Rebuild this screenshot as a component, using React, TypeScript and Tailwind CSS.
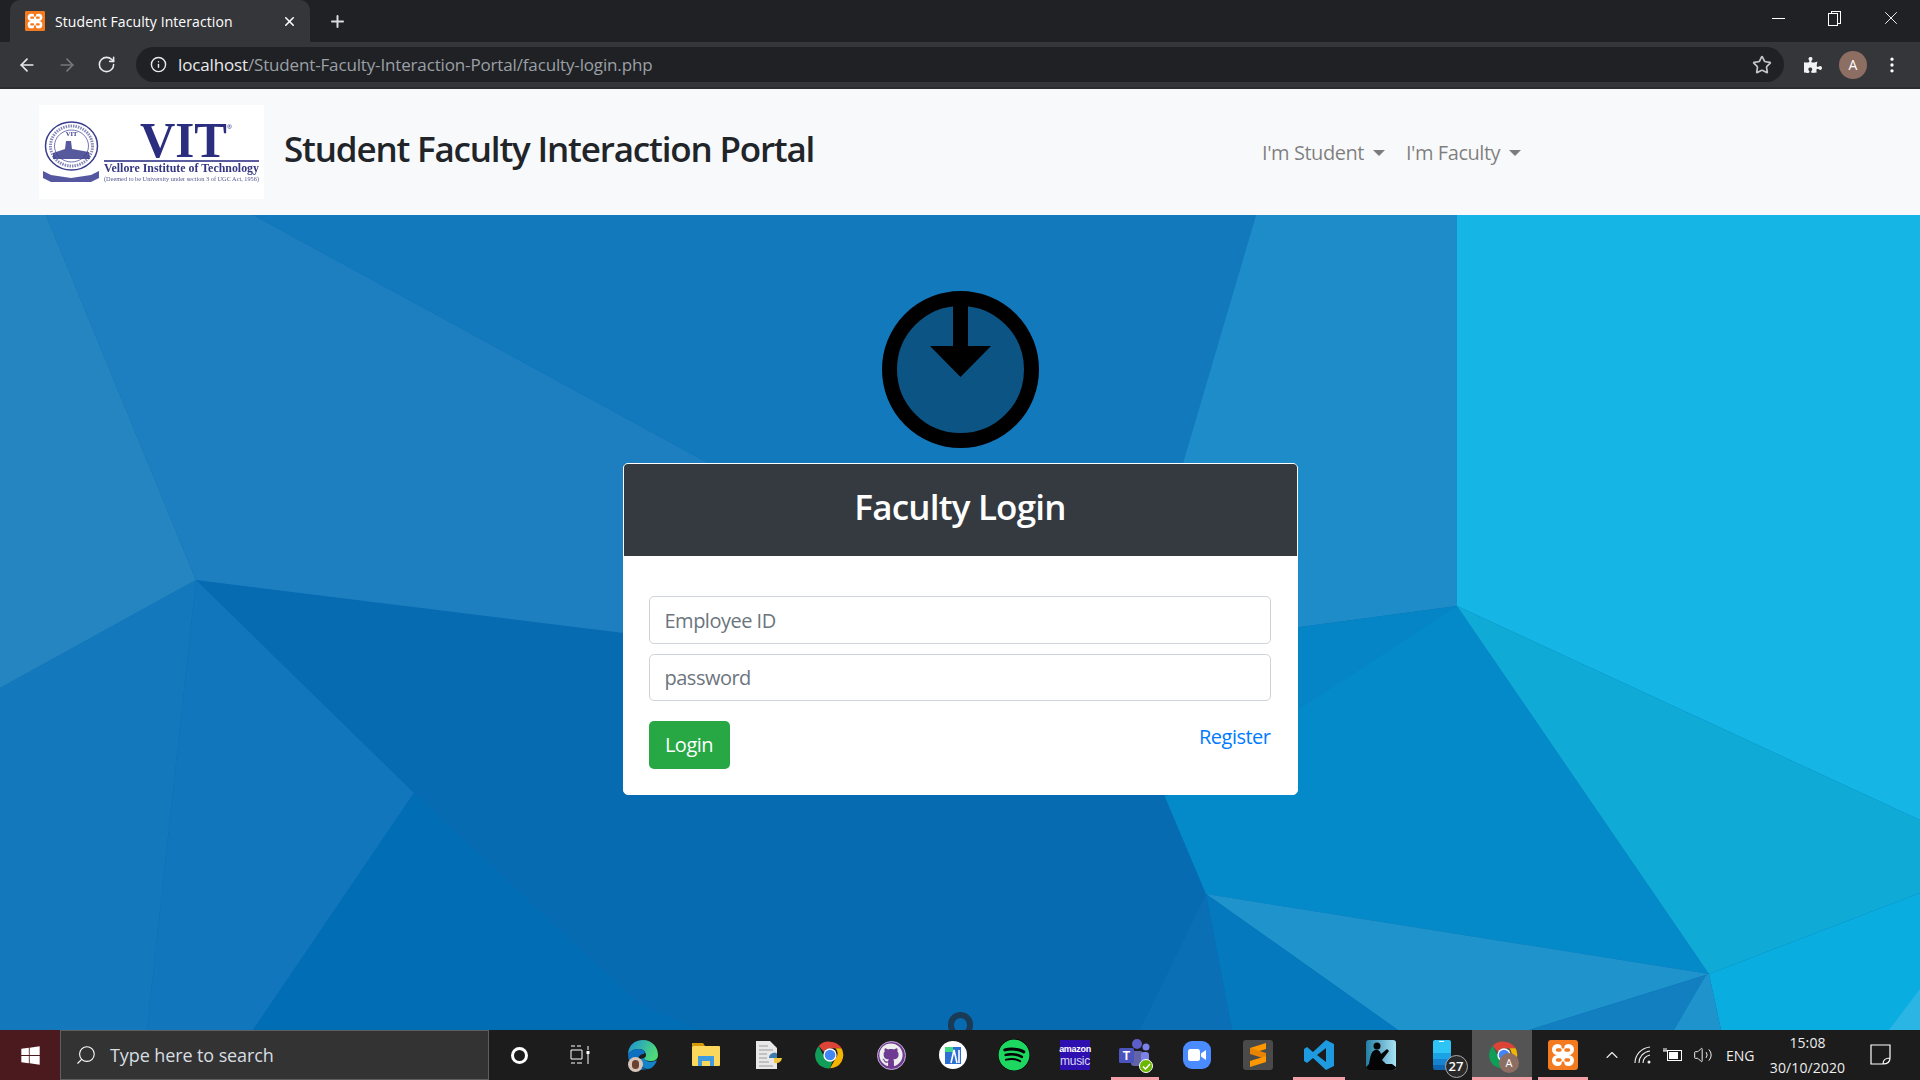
import { ArrowLeft, ArrowRight, RotateCw, Info, Star, EllipsisVertical, X, Plus, ChevronUp, Search, Volume2 } from "lucide-react"
import { FaGithub, FaSpotify, FaWindows, FaPuzzlePiece } from "react-icons/fa"
import type { ReactNode } from "react"

const uiFont = "font-['Open_Sans','Noto_Sans',sans-serif]"

const polygons: [string, string][] = [
  ["0,0 46,0 196,365 0,473", "#2585c0"],
  ["46,0 253,0 708,248 640,300 640,420 196,365", "#1e7fc0"],
  ["253,0 1256,0 1183,248 708,248", "#1279bd"],
  ["1256,0 1457,0 1457,391 1165,430 1183,248", "#1e8cc9"],
  ["1165,430 1457,391 1298,520 1165,582", "#0585c5"],
  ["1457,391 1709,759 1206,679 1165,582", "#058ac9"],
  ["1457,0 1920,0 1920,605 1457,391", "#15b6e6"],
  ["1457,391 1920,605 1920,678 1709,759", "#0faad5"],
  ["1709,759 1920,678 1920,815 1721,815", "#0aade0"],
  ["1920,774 1920,815 1889,815", "#2ab5e5"],
  ["1206,679 1709,759 1529,815 1398,815", "#1f93cb"],
  ["1206,679 1398,815 1232,815", "#0479bd"],
  ["1206,679 1232,815 1140,815", "#0a6fb5"],
  ["1706,760 1529,815 1674,815", "#127fc0"],
  ["1706,760 1674,815 1721,815 1709,759", "#1f93cb"],
  ["0,473 196,365 147,815 0,815", "#1478bd"],
  ["196,365 414,578 253,815 147,815", "#1176bb"],
  ["414,578 640,790 700,815 253,815", "#006db5"],
]

function Background() {
  return (
    <svg className="absolute inset-0 w-full h-full" viewBox="0 0 1920 815" preserveAspectRatio="none">
      <rect width="1920" height="815" fill="#066bb0" />
      {polygons.map(([points, fill]) => (
        <polygon key={points} points={points} fill={fill} />
      ))}
    </svg>
  )
}

function VitLogo() {
  return (
    <svg width="225" height="94" viewBox="0 0 225 94" className="bg-white shrink-0 blur-[0.4px]">
      <g fill="none" stroke="#3a3c8c">
        <ellipse cx="32.5" cy="41" rx="26" ry="24" strokeWidth="1.5" />
        <ellipse cx="32.5" cy="41" rx="21" ry="20" strokeWidth="3" strokeDasharray="1.5 1" opacity="0.6" />
        <ellipse cx="32.5" cy="41" rx="17" ry="16" strokeWidth="0.7" />
      </g>
      <path d="M4 66 L12 70 L32 73 L52 70 L60 66 L60 73 L52 77 L12 77 L4 73 Z" fill="#5557a0" />
      <path d="M14 48 L26 44 L27 36 L32 36 L33 44 L50 47 L51 54 L14 54 Z" fill="#3a3c8c" opacity="0.85" />
      <text x="32.5" y="31" textAnchor="middle" fontSize="6.5" fontFamily="Liberation Serif, serif" fontWeight="700" fill="#3a3c8c">VIT</text>
      <text x="101" y="52" fontSize="50" fontFamily="Liberation Serif, serif" fontWeight="700" fill="#2b2d7f" textLength="87" lengthAdjust="spacingAndGlyphs">VIT</text>
      <text x="188" y="24" fontSize="6" fill="#2b2d7f">®</text>
      <rect x="65" y="55" width="155" height="2" fill="#5a5ca0" />
      <text x="65" y="67" fontSize="11.5" fontFamily="Liberation Serif, serif" fontWeight="700" fill="#34367f" textLength="155" lengthAdjust="spacingAndGlyphs">Vellore Institute of Technology</text>
      <text x="65" y="76" fontSize="5.5" fontFamily="Liberation Serif, serif" fill="#55578f" textLength="155" lengthAdjust="spacingAndGlyphs">(Deemed to be University under section 3 of UGC Act, 1956)</text>
    </svg>
  )
}

function Xampp({ size, radius = 3 }: { size: number; radius?: number }) {
  return (
    <svg width={size} height={size} viewBox="0 0 30 30">
      <rect width="30" height="30" rx={radius} fill="#f47a20" />
      <g fill="#fff">
        <circle cx="9.5" cy="9.5" r="5.5" />
        <circle cx="20.5" cy="9.5" r="5.5" />
        <circle cx="9.5" cy="20.5" r="5.5" />
        <circle cx="20.5" cy="20.5" r="5.5" />
        <rect x="9" y="9" width="12" height="12" />
      </g>
      <path d="M15 4 V7 M15 23 V26" stroke="#f47a20" strokeWidth="3" strokeLinecap="round" />
      <path d="M9.5 10 H12 M18 10 H20.5 M9.5 20 H12 M18 20 H20.5" stroke="#f47a20" strokeWidth="3.5" strokeLinecap="round" />
    </svg>
  )
}

function ChromeIcon({ size = 28 }: { size?: number }) {
  return (
    <svg width={size} height={size} viewBox="0 0 48 48">
      <path d="M24 4 A20 20 0 0 1 41.3 14 L24 14 A10 10 0 0 0 15 19.5 L7 10.5 A20 20 0 0 1 24 4 Z" fill="#db4437" />
      <path d="M41.3 14 A20 20 0 0 1 24 44 L33 28 A10 10 0 0 0 32 14 Z" fill="#f4b400" />
      <path d="M24 44 A20 20 0 0 1 7 10.5 L16 28 A10 10 0 0 0 28 33 Z" fill="#0f9d58" />
      <circle cx="24" cy="24" r="10" fill="#fff" />
      <circle cx="24" cy="24" r="8" fill="#4285f4" />
    </svg>
  )
}

function EdgeIcon() {
  return (
    <div className="relative w-[32px] h-[32px]">
      <svg width="32" height="32" viewBox="0 0 32 32">
        <defs>
          <linearGradient id="edge-top" x1="0" y1="0" x2="1" y2="0.4">
            <stop offset="0" stopColor="#1a8fd8" />
            <stop offset="1" stopColor="#4fd97a" />
          </linearGradient>
        </defs>
        <path d="M1 16 C1 6 8 1 16 1 C25 1 31 8 31 16 C31 20 28 22 24 22 C20 22 17 21 17 19 C21 18 19 10 12 10 C6 10 2 13 1 16 Z" fill="url(#edge-top)" />
        <path d="M1 16 C3 11 8 10 12 10 C17 10 19 13 17 15 C14 15 11 17 11 21 C11 26 16 31 21 30 C12 33 1 27 1 16 Z" fill="#0f6fc0" />
        <path d="M17 19 C18 23 25 24 30 21 C28 27 24 30 21 30 C16 30 12 25 13 20 Z" fill="#1583c9" />
      </svg>
      <div className="absolute left-[1px] bottom-[-1px] w-[15px] h-[15px] rounded-full bg-[#d8c4b8] flex items-center justify-center">
        <div className="w-[7px] h-[9px] rounded-full bg-[#6a4030]" />
      </div>
    </div>
  )
}

function FolderIcon() {
  return (
    <svg width="28" height="28" viewBox="0 0 28 28">
      <path d="M0 2 H11 L13 5 H0 Z" fill="#d69a06" />
      <rect y="5" width="28" height="20" rx="1" fill="#fbd75b" />
      <path d="M6 25 V15 H22 V25 H18 V20 H10 V25 Z" fill="#3f9ae0" />
    </svg>
  )
}

function PythonFile() {
  return (
    <svg width="28" height="30" viewBox="0 0 28 30">
      <path d="M1 1 H15 L22 8 V29 H1 Z" fill="#e8e8e8" />
      <path d="M4 6 H13 M4 10 H18 M4 14 H12 M4 18 H12 M4 22 H14 M4 26 H18" stroke="#999" strokeWidth="1.2" />
      <path d="M14 18 C14 12 22 12 22 14 V18 H14 Z" fill="#3f7cac" />
      <path d="M27 17 C27 24 19 24 19 22 V18 H27 Z" fill="#f2c63c" />
    </svg>
  )
}

function AndroidStudio() {
  return (
    <div className="w-[28px] h-[28px] rounded-full bg-white flex items-center justify-center">
      <svg width="18" height="20" viewBox="0 0 18 20">
        <rect x="1" y="2" width="16" height="17" fill="#2d6fd6" />
        <path d="M1 2 H9 V7 H1 Z" fill="#3ddc84" />
        <path d="M7 18 L10 5 L13 18 M15 5 V18" stroke="#fff" strokeWidth="1.6" fill="none" />
      </svg>
    </div>
  )
}

function AmazonMusic() {
  return (
    <div className="w-[30px] h-[30px] bg-[#2e0fb0] flex flex-col items-center justify-center text-white leading-[12px] font-['Liberation_Sans',sans-serif]">
      <span className="text-[9px] font-bold tracking-[-0.3px]">amazon</span>
      <span className="text-[12px] tracking-[-0.3px] text-[#d8d8f0]">music</span>
    </div>
  )
}

function TeamsIcon() {
  return (
    <div className="relative w-[32px] h-[32px]">
      <svg width="32" height="32" viewBox="0 0 32 32">
        <circle cx="18" cy="5" r="5" fill="#5b5fc7" />
        <circle cx="27" cy="8" r="3.5" fill="#7b83eb" />
        <rect x="12" y="12" width="12" height="15" rx="3" fill="#6264a7" />
        <rect x="22" y="13" width="8" height="11" rx="3" fill="#7b83eb" />
        <rect x="0" y="9" width="15" height="15" rx="1.5" fill="#4b53bc" />
        <text x="7.5" y="21" textAnchor="middle" fontSize="12" fontWeight="700" fill="#fff" fontFamily="Liberation Sans, sans-serif">T</text>
      </svg>
      <div className="absolute right-[-2px] bottom-[-2px] w-[14px] h-[14px] rounded-full bg-[#6bb700] border border-white flex items-center justify-center">
        <svg width="9" height="9" viewBox="0 0 9 9"><path d="M1 4.5 L3.5 7 L8 2" stroke="#fff" strokeWidth="1.5" fill="none" /></svg>
      </div>
    </div>
  )
}

function ZoomIcon() {
  return (
    <div className="w-[28px] h-[28px] rounded-[9px] bg-[#4a8cff] flex items-center justify-center">
      <svg width="18" height="12" viewBox="0 0 18 12">
        <rect width="12" height="12" rx="2.5" fill="#fff" />
        <path d="M13 4.5 L18 1 V11 L13 7.5 Z" fill="#fff" />
      </svg>
    </div>
  )
}

function SublimeIcon() {
  return (
    <div className="w-[30px] h-[30px] rounded-[3px] bg-[#4a4a4a] flex items-center justify-center">
      <svg width="16" height="24" viewBox="0 0 16 24">
        <path d="M16 0 V6 L0 11 V5 Z" fill="#ff9800" />
        <path d="M0 11 L16 16 V10 L0 5 Z" fill="#e88400" />
        <path d="M16 13 V19 L0 24 V18 Z" fill="#ff9800" />
      </svg>
    </div>
  )
}

function VsCodeIcon() {
  return (
    <svg width="30" height="30" viewBox="0 0 30 30">
      <path d="M22 0 L30 4 V26 L22 30 L9 18 L3 23 L0 21 V9 L3 7 L9 12 Z M22 8 L13 15 L22 22 Z" fill="#1e9be0" />
    </svg>
  )
}

function KindleIcon() {
  return (
    <div className="w-[30px] h-[30px] rounded-[3px] bg-gradient-to-r from-[#1f7fa5] to-[#a8e4f5] overflow-hidden">
      <svg width="30" height="30" viewBox="0 0 30 30">
        <circle cx="11" cy="6" r="3.5" fill="#050505" />
        <path d="M0 30 V27 L3 24 C4 18 5 11 9 10 C12 9 14 11 15 14 L21 9 L23 11 L16 20 L20 24 L26 24 L30 27 V30 Z" fill="#050505" />
      </svg>
    </div>
  )
}

function PhoneIcon() {
  return (
    <div className="relative w-[18px] h-[30px]">
      <div className="w-[18px] h-[30px] rounded-[2px] overflow-hidden flex flex-col">
        <div className="h-[13px] bg-[#2ec4f5] flex justify-center pt-[1px]">
          <div className="w-[5px] h-[1px] bg-white" />
        </div>
        <div className="h-[6px] bg-[#1ca3e6]" />
        <div className="h-[6px] bg-[#1583cf]" />
        <div className="h-[5px] bg-[#0f66b0]" />
      </div>
      <div className="absolute left-[12px] top-[15px] w-[23px] h-[23px] rounded-full bg-[#2a2a2a] border border-[#aaa] text-white text-[13px] font-semibold flex items-center justify-center">27</div>
    </div>
  )
}

function ActiveChrome() {
  return (
    <div className="relative w-[28px] h-[32px]">
      <ChromeIcon size={32} />
      <div className="absolute left-[11px] top-[14px] w-[20px] h-[20px] rounded-full bg-[#8d6e63] text-white text-[11px] flex items-center justify-center">A</div>
    </div>
  )
}

interface Slot {
  width: number
  icon: ReactNode
  underline?: string
  active?: boolean
}

const slots: Slot[] = [
  { width: 61, icon: <div className="w-[17px] h-[17px] rounded-full border-[3px] border-white" /> },
  {
    width: 60,
    icon: (
      <svg width="20" height="20" viewBox="0 0 20 20" fill="none" stroke="#fff" strokeWidth="1">
        <path d="M5 1 H1 M11 1 H7 M1 5 H12 V14 H1 Z M5 18 H1 M12 18 H7 M18 1 V5 M18 9 V19" />
        <rect x="16.5" y="6" width="3" height="3" fill="#fff" stroke="none" />
      </svg>
    ),
  },
  { width: 65, icon: <EdgeIcon /> },
  { width: 62, icon: <FolderIcon /> },
  { width: 63, icon: <PythonFile /> },
  { width: 60, icon: <ChromeIcon size={32} /> },
  {
    width: 62,
    icon: (
      <div className="w-[29px] h-[29px] rounded-full bg-[#6e3a92] border border-[#c5b0d5] flex items-center justify-center">
        <FaGithub size={24} color="#eee" />
      </div>
    ),
  },
  { width: 61, icon: <AndroidStudio /> },
  { width: 62, icon: <FaSpotify size={32} color="#1ed760" className="bg-black rounded-full" /> },
  { width: 60, icon: <AmazonMusic /> },
  { width: 60, icon: <TeamsIcon />, underline: "inset-x-[6px]" },
  { width: 63, icon: <ZoomIcon /> },
  { width: 60, icon: <SublimeIcon /> },
  { width: 62, icon: <VsCodeIcon />, underline: "inset-x-[5px]" },
  { width: 61, icon: <KindleIcon /> },
  { width: 61, icon: <PhoneIcon /> },
  { width: 60, icon: <ActiveChrome />, underline: "inset-x-0", active: true },
  { width: 50, icon: <Xampp size={30} />, underline: "inset-x-0" },
]

function BrowserChrome() {
  return (
    <div className={`shrink-0 font-['Open_Sans',sans-serif]`}>
      <div className="h-[42px] bg-[#202124] flex items-end">
        <div className="ml-[10px] w-[300px] h-[42px] bg-[#35363a] rounded-t-[10px] flex items-center pl-[15px] pr-[13px] text-white">
          <Xampp size={20} radius={2} />
          <span className="ml-[10px] text-[14px] tracking-[0.08px] flex-1">Student Faculty Interaction</span>
          <X size={15} strokeWidth={2.5} />
        </div>
        <div className="ml-[18px] h-[42px] flex items-center text-[#dadce0]">
          <Plus size={19} strokeWidth={2.5} />
        </div>
        <div className="ml-auto h-[42px] flex items-center pb-[6px] text-white">
          <div className="w-[56px] flex justify-center"><div className="w-[13px] h-[1px] bg-white" /></div>
          <div className="w-[56px] flex justify-center">
            <div className="relative w-[13px] h-[15px]">
              <div className="absolute left-[3px] top-0 w-[10px] h-[13px] border border-white" />
              <div className="absolute left-0 top-[2px] w-[10px] h-[13px] border border-white bg-[#202124]" />
            </div>
          </div>
          <div className="w-[58px] flex justify-center"><X size={22} strokeWidth={1} /></div>
        </div>
      </div>
      <div className="h-[47px] bg-[#35363a] border-b-2 border-[#2b2c2f] flex items-start pt-[5px]">
        <div className="w-[136px] h-[35px] flex items-center pl-[17px] gap-[20px]">
          <ArrowLeft size={20} color="#e8eaed" />
          <ArrowRight size={20} color="#75777b" />
          <RotateCw size={19} color="#e8eaed" />
        </div>
        <div className="w-[1648px] h-[35px] rounded-full bg-[#202124] flex items-center pl-[14px] pr-[12px]">
          <Info size={17} color="#e8eaed" />
          <span className="ml-[11px] text-[17px] tracking-[-0.15px] text-[#e8eaed] flex-1">
            localhost<span className="text-[#9aa0a6]">/Student-Faculty-Interaction-Portal/faculty-login.php</span>
          </span>
          <Star size={20} color="#c4c7c9" />
        </div>
        <div className="flex-1 h-[35px] flex items-center pl-[20px] text-white">
          <FaPuzzlePiece size={18} color="#f1f3f4" />
          <div className="ml-[17px] w-[28px] h-[28px] rounded-full bg-[#8d6e63] flex items-center justify-center text-[14px]">A</div>
          <EllipsisVertical size={20} className="ml-[15px]" />
        </div>
      </div>
    </div>
  )
}

function Navbar() {
  return (
    <nav className={`h-[126px] shrink-0 bg-[#f8f9fa] flex items-start pl-[39px] pt-[16px] ${uiFont}`}>
      <VitLogo />
      <span className="ml-[20px] mt-[19px] w-[530px] text-[35px] leading-[50px] tracking-[-1.18px] font-semibold text-[#212529] whitespace-nowrap">
        Student Faculty Interaction Portal
      </span>
      <div className="ml-[448px] mt-[33px] flex items-center gap-[21px] text-[20px] leading-[30px] tracking-[-0.45px] text-black/50">
        <span className="flex items-center gap-[9px]">
          I'm Student
          <span className="w-0 h-0 border-x-[6px] border-x-transparent border-t-[6px] border-t-black/50" />
        </span>
        <span className="flex items-center gap-[9px]">
          I'm Faculty
          <span className="w-0 h-0 border-x-[6px] border-x-transparent border-t-[6px] border-t-black/50" />
        </span>
      </div>
    </nav>
  )
}

function LoginAvatar() {
  return (
    <svg width="157" height="157" viewBox="0 0 157 157" className="shrink-0">
      <circle cx="78.5" cy="78.5" r="71" fill="rgba(0,0,0,0.3)" stroke="#000" strokeWidth="15" />
      <path d="M71 5 H86 V55 H109 L78.5 86 L48 55 H71 Z" fill="#000" />
    </svg>
  )
}

function LoginCard() {
  return (
    <div className="w-[675px] h-[332px] mt-[15px] bg-white rounded-[5px] border border-white overflow-hidden">
      <div className="h-[92px] bg-[#343a40] flex items-center justify-center pb-[6px]">
        <h2 className="text-[35px] tracking-[-0.8px] font-semibold text-white">Faculty Login</h2>
      </div>
      <div className="pl-[25px] pr-[26px] pt-[40px]">
        <input
          placeholder="Employee ID"
          className="block w-full h-[48px] px-[15px] rounded-[5px] border border-[#ced4da] text-[20px] tracking-[-0.5px] placeholder:text-[#6c757d] outline-none"
        />
        <input
          placeholder="password"
          className="block w-full h-[47px] mt-[10px] px-[15px] rounded-[5px] border border-[#ced4da] text-[20px] tracking-[-0.5px] placeholder:text-[#6c757d] outline-none"
        />
        <div className="flex items-start justify-between mt-[20px]">
          <button className="w-[81px] h-[48px] rounded-[5px] bg-[#28a745] text-white text-[20px] tracking-[-0.5px]">Login</button>
          <a className="mt-[1px] text-[20px] tracking-[-0.5px] text-[#007bff]">Register</a>
        </div>
      </div>
    </div>
  )
}

function Taskbar() {
  return (
    <div className="relative h-[50px] shrink-0 bg-[#1c1c1c] flex items-stretch font-['Open_Sans',sans-serif] text-white">
      <div className="w-[60px] bg-[#4a1a1f] flex items-center justify-center">
        <FaWindows size={21} />
      </div>
      <div className="w-[429px] bg-[#333] border border-[#5f5f5f] flex items-center pl-[14px]">
        <Search size={22} strokeWidth={1.2} className="-scale-x-100" />
        <span className="ml-[13px] text-[18px] tracking-[-0.1px] text-[#d8dde2]">Type here to search</span>
      </div>
      {slots.map((slot, i) => (
        <div
          key={i}
          className={`relative flex items-center justify-center ${slot.active ? "bg-[#545454]" : ""} ${i === 17 ? "ml-[6px]" : ""}`}
          style={{ width: slot.width }}
        >
          {slot.icon}
          {slot.underline && <div className={`absolute bottom-0 h-[3px] bg-[#f4a0a8] ${slot.underline}`} />}
        </div>
      ))}
      <div className="flex-1 flex items-center pl-[14px] text-[#eee]">
        <ChevronUp size={20} strokeWidth={1.3} />
        <svg width="20" height="20" viewBox="0 0 20 20" fill="none" stroke="#eee" strokeWidth="1.1" className="ml-[11px]">
          <path d="M2 18 C2 10 8 3 17 2 M6 18 C6 12 10 7 17 6 M10 18 C10 14 13 11 17 10" />
          <circle cx="16" cy="17" r="1.5" fill="#eee" stroke="none" />
        </svg>
        <svg width="20" height="16" viewBox="0 0 20 16" fill="none" stroke="#fff" className="ml-[10px]">
          <rect x="4.5" y="3.5" width="14" height="10" />
          <rect x="6" y="5" width="9" height="7" fill="#fff" stroke="none" />
          <path d="M0 4 H4 M1 1 V4 M3 1 V4" strokeWidth="1" />
        </svg>
        <Volume2 size={20} strokeWidth={1.2} className="ml-[10px]" />
        <span className="ml-[13px] text-[14px]">ENG</span>
        <div className="ml-[13px] w-[80px] text-center text-[14px] leading-[25px] tracking-[0.1px]">
          <div>15:08</div>
          <div>30/10/2020</div>
        </div>
        <svg width="22" height="22" viewBox="0 0 22 22" fill="none" stroke="#fff" strokeWidth="1.2" className="ml-[22px]">
          <path d="M1 1 H20 V14 C20 18 17 20 13 20 H1 Z M13 20 C13 16 16 14 20 14" />
        </svg>
      </div>
    </div>
  )
}

export default function App() {
  return (
    <div className="h-screen w-[1920px] overflow-hidden flex flex-col">
      <BrowserChrome />
      <Navbar />
      <main className={`relative h-[815px] shrink-0 overflow-hidden flex flex-col items-center pt-[76px] ${uiFont}`}>
        <Background />
        <div className="relative flex flex-col items-center">
          <LoginAvatar />
          <LoginCard />
        </div>
        <div className="absolute left-[948px] bottom-[-8px] w-[25px] h-[26px] rounded-full border-[6px] border-[#1b3a55]" />
      </main>
      <Taskbar />
    </div>
  )
}
